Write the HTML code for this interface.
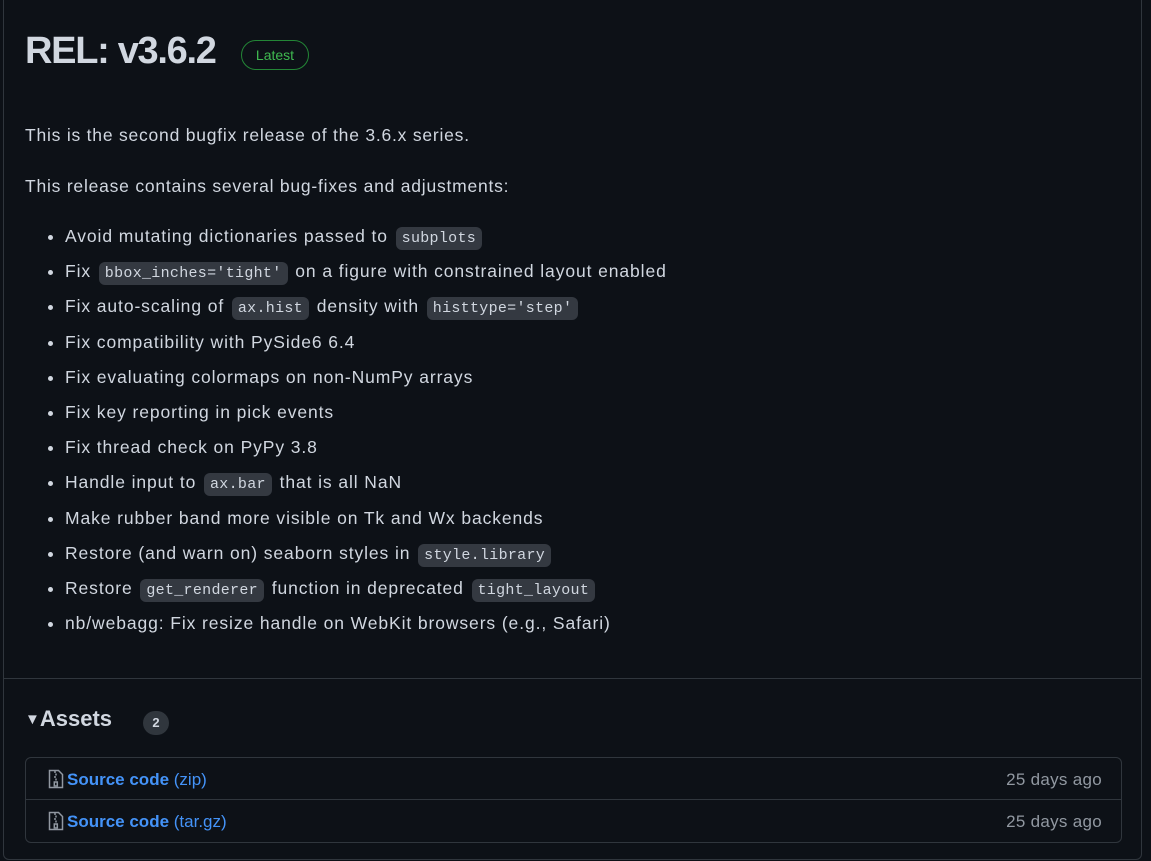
<!DOCTYPE html>
<html><head><meta charset="utf-8"><style>
body{margin:0;background:#0d1117;width:1151px;height:861px;overflow:hidden;font-family:"Liberation Sans",sans-serif;color:#d1d7e0}
.box{position:absolute;left:3px;top:-8px;width:1137px;height:866px;border:1px solid #30363d;border-radius:6px}
h1{position:absolute;left:25px;top:30px;margin:0;font-size:38px;font-weight:bold;color:#d1d7e0;letter-spacing:-1.3px}
.badge{position:absolute;left:241px;top:40px;width:66px;height:28px;border:1px solid #238636;border-radius:15px;color:#3fb950;font-size:14px;text-align:center;line-height:28px}
p{position:absolute;left:25px;margin:0;font-size:17.5px;letter-spacing:0.78px}
ul{position:absolute;left:25px;top:219px;margin:0;padding:0 0 0 40px;font-size:17.5px;letter-spacing:0.9px}
li{height:35.2px;line-height:35px}
code{font-family:"Liberation Mono",monospace;font-size:15px;letter-spacing:0.3px;background:#343941;border-radius:6px;padding:3px 6px;margin:0 2px}
.hr{position:absolute;left:4px;width:1137px;top:678px;border-top:1px solid #30363d}
.assets{position:absolute;left:25px;top:706px;font-size:22px;font-weight:bold}
.cnt{position:absolute;left:143px;top:711px;width:26px;height:24px;border-radius:12px;background:#30363d;font-size:13px;text-align:center;line-height:24px;font-weight:bold}
.ab{position:absolute;left:25px;top:757px;width:1095px;height:84px;border:1px solid #30363d;border-radius:6px}
.row{position:absolute;left:0;width:1095px;height:41px;line-height:43px;font-size:17px}
.row a{position:absolute;left:41px;color:#4493f8;text-decoration:none}
.row .t{position:absolute;right:19px;color:#9198a1;letter-spacing:0.3px}
.ic{position:absolute;left:22px;top:11px}
</style></head><body>
<div class="box"></div>
<h1>REL: v3.6.2</h1>
<div class="badge">Latest</div>
<p style="top:125px">This is the second bugfix release of the 3.6.x series.</p>
<p style="top:176px">This release contains several bug-fixes and adjustments:</p>
<ul>
<li>Avoid mutating dictionaries passed to <code>subplots</code></li>
<li>Fix <code>bbox_inches='tight'</code> on a figure with constrained layout enabled</li>
<li>Fix auto-scaling of <code>ax.hist</code> density with <code>histtype='step'</code></li>
<li>Fix compatibility with PySide6 6.4</li>
<li>Fix evaluating colormaps on non-NumPy arrays</li>
<li>Fix key reporting in pick events</li>
<li>Fix thread check on PyPy 3.8</li>
<li>Handle input to <code>ax.bar</code> that is all NaN</li>
<li>Make rubber band more visible on Tk and Wx backends</li>
<li>Restore (and warn on) seaborn styles in <code>style.library</code></li>
<li>Restore <code>get_renderer</code> function in deprecated <code>tight_layout</code></li>
<li>nb/webagg: Fix resize handle on WebKit browsers (e.g., Safari)</li>
</ul>
<div class="hr"></div>
<div class="assets"><span style="font-size:15px;position:relative;top:-2px">▼</span>Assets</div>
<div class="cnt">2</div>
<div class="ab">
<div class="row" style="top:0;border-bottom:1px solid #30363d">
<svg class="ic" width="16" height="20" viewBox="0 0 16 20" fill="none" stroke="#9198a1" stroke-width="1.5"><path d="M1.5 1.5h9l4 4v13h-13z"/><path d="M7 2v2M8 4.5v2M7 7v2M8 9.5v2"/><rect x="6.3" y="13" width="3" height="4"/></svg>
<a><b>Source code</b> (zip)</a><span class="t">25 days ago</span></div>
<div class="row" style="top:42px">
<svg class="ic" width="16" height="20" viewBox="0 0 16 20" fill="none" stroke="#9198a1" stroke-width="1.5"><path d="M1.5 1.5h9l4 4v13h-13z"/><path d="M7 2v2M8 4.5v2M7 7v2M8 9.5v2"/><rect x="6.3" y="13" width="3" height="4"/></svg>
<a><b>Source code</b> (tar.gz)</a><span class="t">25 days ago</span></div>
</div>
</body></html>
